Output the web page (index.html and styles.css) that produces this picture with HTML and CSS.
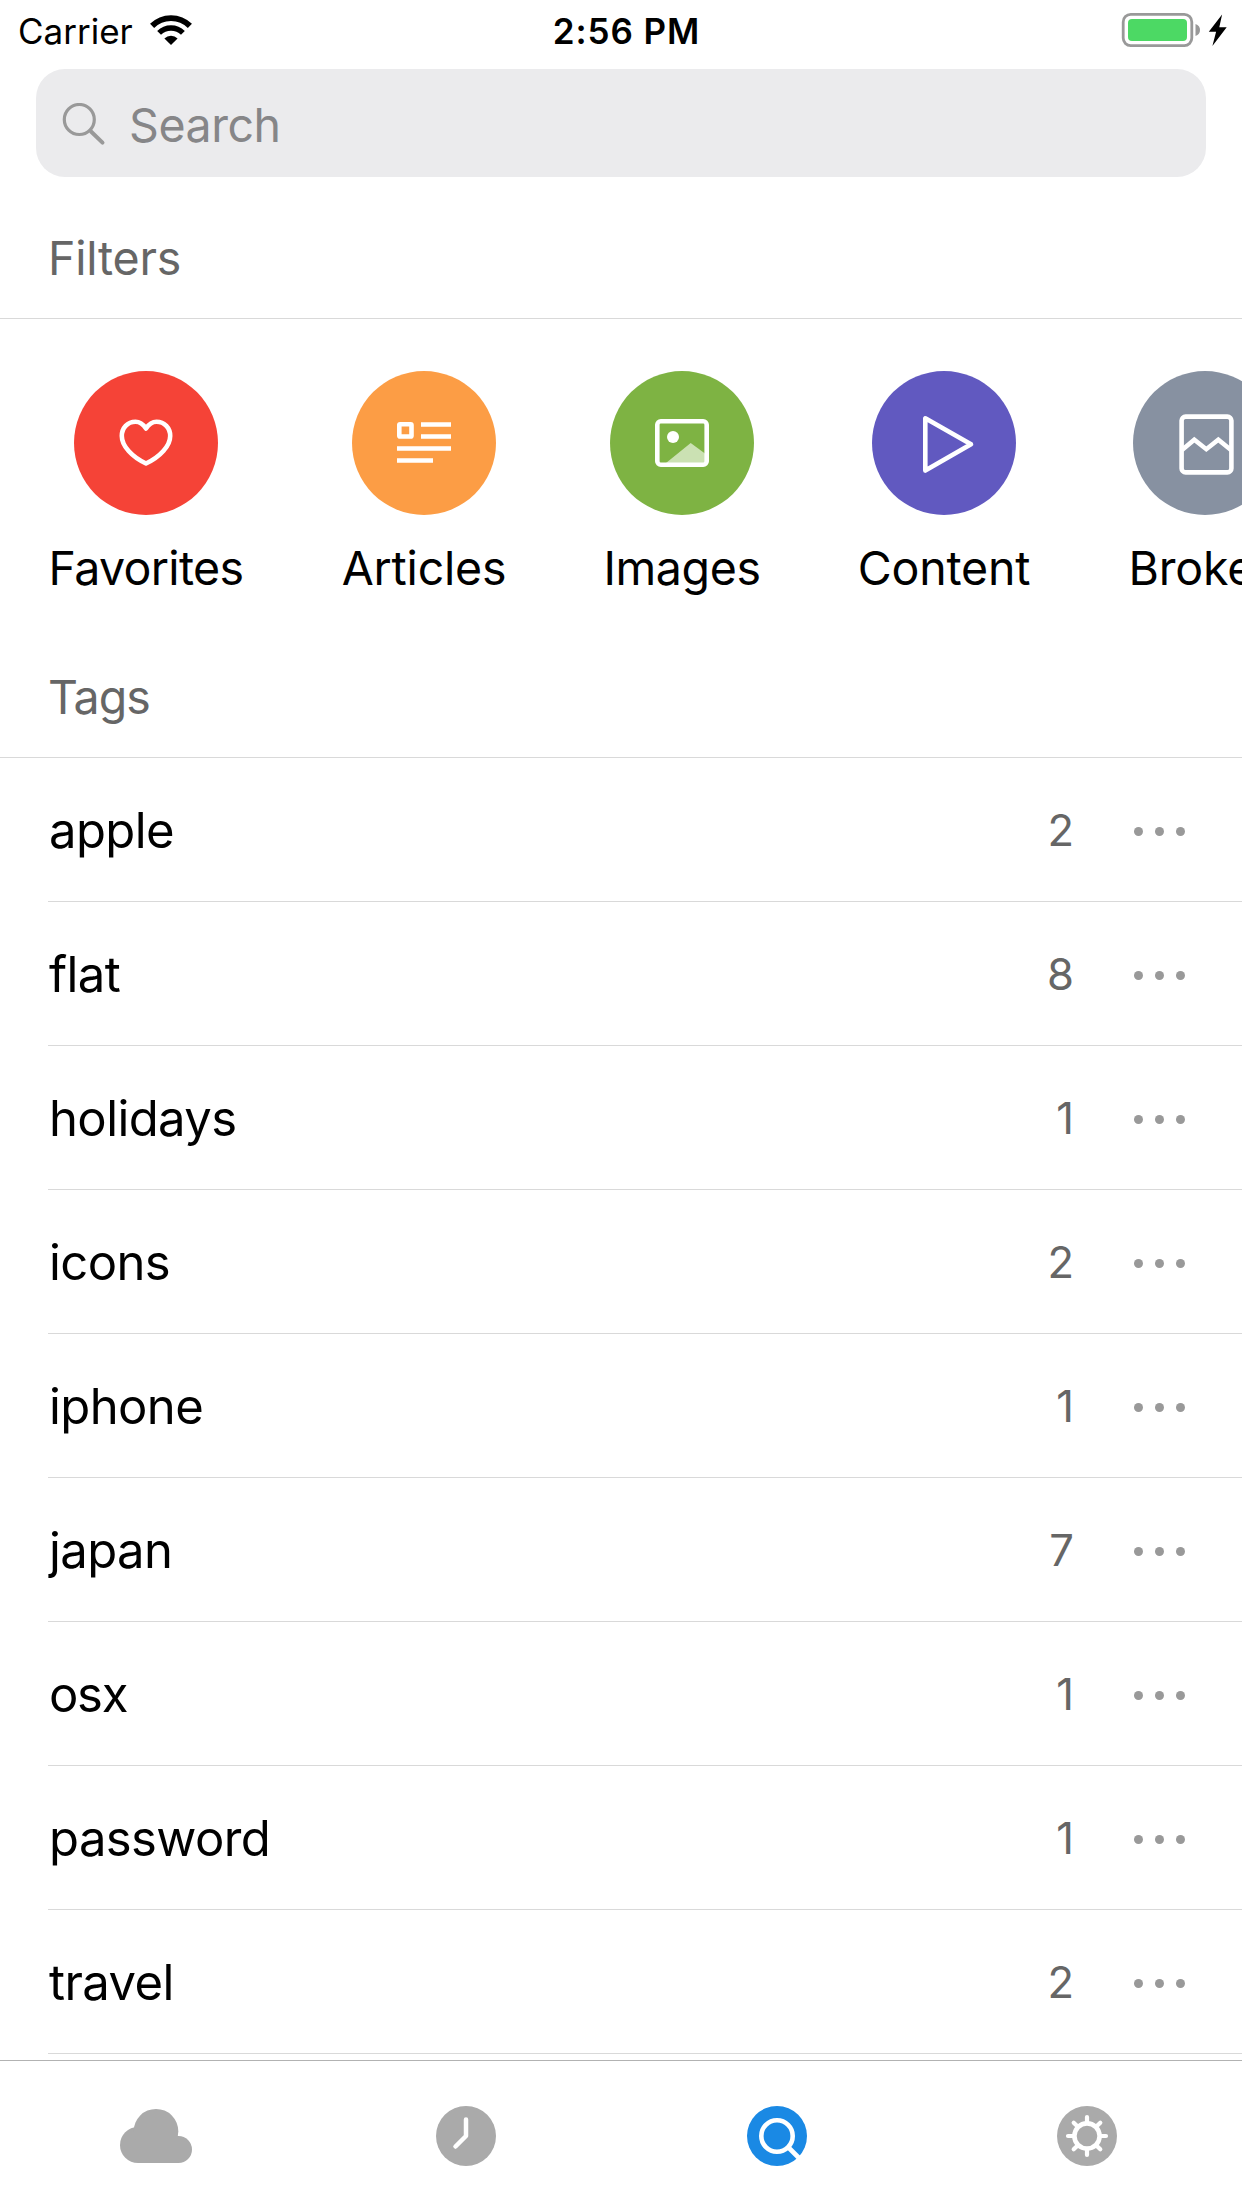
FILE: index.html
```html
<!DOCTYPE html>
<html lang="en">
<head>
<meta charset="utf-8">
<title>Search</title>
<link rel="stylesheet" href="styles.css">
</head>
<body>
<div class="status">
  <div class="status-left">
    <span>Carrier</span>
    <svg class="wifi" width="42" height="30" viewBox="0 0 42 30" fill="none" stroke="#000">
      <path stroke-width="5.8" d="M2.1 10.9a26.7 26.7 0 0 1 37.8 0"/>
      <path stroke-width="5.4" d="M9.1 17.9a16.8 16.8 0 0 1 23.8 0"/>
      <path fill="#000" stroke="none" d="M21 30l-6.6-6.6a9.3 9.3 0 0 1 13.2 0z"/>
    </svg>
  </div>
  <div class="time">2:56 PM</div>
  <svg class="battery" width="106" height="34" viewBox="0 0 106 34">
    <rect x="2.2" y="1.4" width="68.6" height="31.2" rx="7.5" fill="none" stroke="#999" stroke-width="2.8"/>
    <rect x="7" y="6" width="59" height="22" rx="4" fill="#4cd964"/>
    <path d="M74.5 11q4.5 1.500 4.500 6t-4.500 6z" fill="#999"/>
    <path d="M101.100 1.500L87.800 18.700h7.300L91.400 33l14.300-18.700h-7.400z"/>
  </svg>
</div>

<div class="search">
  <svg width="44" height="44" viewBox="0 0 44 44" fill="none" stroke="#999" stroke-width="3.200" stroke-linecap="round">
    <circle cx="17.300" cy="16.500" r="15"/><path stroke-width="4" d="M29 28.500L40.500 39.600"/>
  </svg>
  <span>Search</span>
</div>

<h2 class="heading">Filters</h2>
<div class="filters">
  <div class="filter favorites">
    <svg class="disc" viewBox="0 0 144 144"><path d="M72 57.500C69 53 66 50.800 61.500 50.800 53.500 50.800 47.800 57 47.800 65 47.800 75 58 86 72 92.500 86 86 96.200 75 96.200 65 96.200 57 90.500 50.800 82.500 50.800 78 50.800 75 53 72 57.500z"/></svg>
    <span>Favorites</span>
  </div>
  <div class="filter articles">
    <svg class="disc" viewBox="0 0 144 144"><rect x="47.300" y="53.300" width="12.200" height="12.200" rx=".8"/><path d="M69 53.500h30M69 65.500h30M45 77.500h54M45 89.500h36"/></svg>
    <span>Articles</span>
  </div>
  <div class="filter images">
    <svg class="disc" viewBox="0 0 144 144"><path class="hill" d="M56 92l24.700-20L97 84v9z"/><rect x="47.300" y="50.300" width="49.400" height="43.400" rx="3.500"/><circle class="sun" cx="63" cy="66" r="6"/></svg>
    <span>Images</span>
  </div>
  <div class="filter content">
    <svg class="disc" viewBox="0 0 144 144"><path d="M53.300 47.300v52.300L99 73.300z"/></svg>
    <span>Content</span>
  </div>
  <div class="filter broken">
    <svg class="disc" viewBox="0 0 144 144"><rect x="48.600" y="45.600" width="49.800" height="55.800" rx="4"/><path d="M49 79l12.300-10.200 12 9.400 12-9.400L98 79"/></svg>
    <span>Broken</span>
  </div>
</div>

<h2 class="heading tags-heading">Tags</h2>
<ul class="tags">
  <li><span class="name">apple</span><span class="count">2</span><span class="more"><i></i><i></i><i></i></span></li>
  <li><span class="name">flat</span><span class="count">8</span><span class="more"><i></i><i></i><i></i></span></li>
  <li><span class="name">holidays</span><span class="count">1</span><span class="more"><i></i><i></i><i></i></span></li>
  <li><span class="name">icons</span><span class="count">2</span><span class="more"><i></i><i></i><i></i></span></li>
  <li><span class="name">iphone</span><span class="count">1</span><span class="more"><i></i><i></i><i></i></span></li>
  <li><span class="name">japan</span><span class="count">7</span><span class="more"><i></i><i></i><i></i></span></li>
  <li><span class="name tight">osx</span><span class="count">1</span><span class="more"><i></i><i></i><i></i></span></li>
  <li><span class="name">password</span><span class="count">1</span><span class="more"><i></i><i></i><i></i></span></li>
  <li><span class="name">travel</span><span class="count">2</span><span class="more"><i></i><i></i><i></i></span></li>
</ul>

<nav class="tabbar">
  <a><svg width="72" height="60" viewBox="0 0 72 60" fill="#aaa"><circle cx="18" cy="39" r="18"/><circle cx="36" cy="25.200" r="22.300"/><circle cx="58.500" cy="43.500" r="13.500"/><path d="M18 30h40.500v27H18z"/></svg></a>
  <a><svg width="60" height="60" viewBox="0 0 60 60"><circle cx="30" cy="30" r="30" fill="#aaa"/><path d="M30 13.500V30L19.500 40.500" fill="none" stroke="#fff" stroke-width="4.500" stroke-linecap="round" stroke-linejoin="round"/></svg></a>
  <a><svg width="60" height="60" viewBox="0 0 60 60"><circle cx="30" cy="30" r="30" fill="#1a89e4"/><g fill="none" stroke="#fff" stroke-width="4.600"><circle cx="30" cy="30" r="15.700"/><path d="M41.500 41.500L53 53"/></g></svg></a>
  <a><svg width="60" height="60" viewBox="0 0 60 60"><circle cx="30" cy="30" r="30" fill="#aaa"/><g fill="none" stroke="#fff" stroke-width="4.200" stroke-linecap="round"><circle cx="30" cy="30" r="12.600" stroke-width="4.600"/><path d="M30 16v-5M30 44v5M16 30h-5M44 30h5M20.100 20.100l-3.400-3.400M39.900 20.100l3.400-3.400M20.100 39.900l-3.400 3.400M39.900 39.900l3.400 3.400"/></g></svg></a>
</nav>
</body>
</html>
```

FILE: styles.css
```css
* { box-sizing: border-box; }
body {
  margin: 0;
  height: 2208px;
  display: flex;
  flex-direction: column;
  overflow: hidden;
  background: #fff;
  color: #000;
  font-family: Inter, "Liberation Sans", sans-serif;
}
svg { display: block; flex: none; }

.status {
  height: 62px;
  display: grid;
  grid-template-columns: 1fr auto 1fr;
  align-items: center;
  padding: 0 15px 0 18px;
  font-size: 35px;
}
.status-left { display: flex; align-items: center; gap: 17px; }
.time { padding-left: 8px; font-weight: 600; letter-spacing: 0.9px; }
.battery { justify-self: end; margin-bottom: 2px; }
.wifi { margin-bottom: 2px; }

.search {
  height: 108px;
  margin: 7px 36px 0;
  padding: 4px 26px 0;
  border-radius: 29px;
  background: #ebebed;
  display: flex;
  align-items: center;
  gap: 23px;
  font-size: 46.5px;
  letter-spacing: -0.45px;
  color: #868688;
}

.heading {
  height: 144px;
  margin: 0;
  padding: 53px 48px 0;
  border-bottom: 1px solid #d9d9d9;
  font-size: 46.5px;
  font-weight: 400;
  line-height: 60px;
  letter-spacing: -0.2px;
  color: #666;
}
.search + .heading { margin-top: -2px; }
.tags-heading { letter-spacing: -1px; }

.filters {
  height: 295px;
  padding: 52px 0 0 48px;
  display: flex;
  gap: 96px;
  overflow: hidden;
}
.filter {
  flex: none;
  display: flex;
  flex-direction: column;
  align-items: center;
  gap: 25px;
  font-size: 46.5px;
  line-height: 56px;
  letter-spacing: -0.2px;
  white-space: nowrap;
}
.disc {
  width: 144px;
  height: 144px;
  border-radius: 50%;
  fill: none;
  stroke: #fff;
  stroke-width: 4.6px;
  stroke-linejoin: round;
}
.hill { fill: #fff; fill-opacity: .6; stroke: none; }
.sun { fill: #fff; stroke: none; }
.favorites { width: 196px; letter-spacing: -0.65px; }
.favorites .disc { background: #f54337; }
.articles { width: 168px; }
.articles .disc { background: #fc9d45; }
.images { width: 156px; letter-spacing: -0.4px; }
.images .disc { background: #7eb343; }
.content { width: 176px; }
.content .disc { background: #6159c0; }
.broken { width: 154px; }
.broken .disc { background: #8791a1; }
.broken path { stroke-linejoin: miter; }

.tags { margin: 0; padding: 0 0 0 48px; list-style: none; }
.tags li {
  height: 144px;
  padding: 2px 57px 0 0;
  border-bottom: 1px solid #d9d9d9;
  display: flex;
  align-items: center;
}
.name { flex: 1; padding-left: 1px; font-size: 49px; letter-spacing: -0.6px; }
.name.tight { letter-spacing: -1.3px; }
.count { width: 60px; text-align: right; font-size: 43.6px; color: #666; }
.more { display: flex; gap: 12px; margin: 2px 0 0 60px; }
.more i { width: 9px; height: 9px; border-radius: 50%; background: #999; }

.tabbar {
  height: 148px;
  margin-top: auto;
  padding: 3px 0 0 1px;
  border-top: 1px solid #b2b2b2;
  display: grid;
  grid-template-columns: repeat(4, 1fr);
  place-items: center;
}
```
